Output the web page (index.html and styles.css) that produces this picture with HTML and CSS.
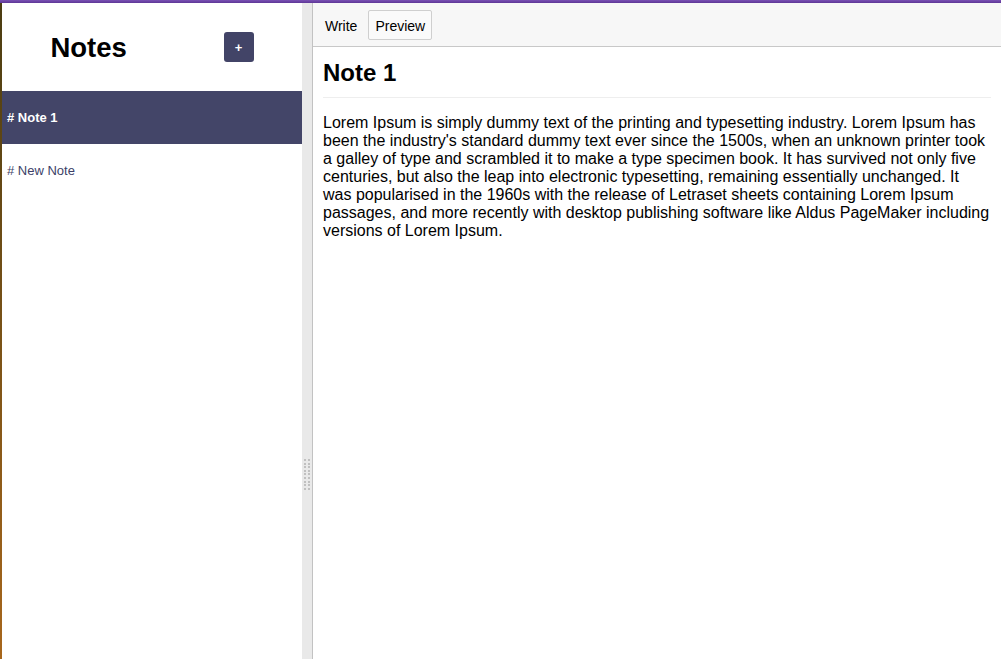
FILE: index.html
```html
<!DOCTYPE html>
<html lang="en">
<head>
<meta charset="utf-8">
<title>Notes</title>
<link rel="stylesheet" href="styles.css">
</head>
<body>
<div class="topbar"></div>
<div class="app">
  <aside class="sidebar">
    <div class="sidebar-header">
      <h3 class="sidebar-title">Notes</h3>
      <button class="new-note">+</button>
    </div>
    <div class="note selected"><h4 class="snippet">&#35; Note 1</h4></div>
    <div class="note"><span class="snippet">&#35; New Note</span></div>
  </aside>
  <div class="gutter">
    <div class="handle">
      <i></i><i></i><i></i><i></i><i></i><i></i><i></i><i></i><i></i><i></i><i></i><i></i><i></i><i></i><i></i><i></i><i></i><i></i>
    </div>
  </div>
  <main class="editor">
    <div class="toolbar">
      <button class="tab">Write</button>
      <button class="tab active">Preview</button>
    </div>
    <div class="preview">
      <h1 class="note-title">Note 1</h1>
      <p class="note-body">Lorem Ipsum is simply dummy text of the printing and typesetting industry. Lorem Ipsum has been the industry's standard dummy text ever since the 1500s, when an unknown printer took a galley of type and scrambled it to make a type specimen book. It has survived not only five centuries, but also the leap into electronic typesetting, remaining essentially unchanged. It was popularised in the 1960s with the release of Letraset sheets containing Lorem Ipsum passages, and more recently with desktop publishing software like Aldus PageMaker including versions of Lorem Ipsum.</p>
    </div>
  </main>
</div>
</body>
</html>
```
FILE: styles.css
```css
* { box-sizing: border-box; }
html, body { margin: 0; height: 100%; }
body {
  font-family: "Liberation Sans", Arial, Helvetica, sans-serif;
  color: #000;
  background: #fff;
  display: flex;
  flex-direction: column;
  overflow: hidden;
}
.topbar {
  height: 3px;
  flex: none;
  background: linear-gradient(#7a52b4, #5e3696);
}
.app {
  flex: 1;
  display: flex;
  min-height: 0;
}
.sidebar {
  width: 302px;
  flex: none;
  border-left: 2px solid;
  border-image: linear-gradient(#4b3d12, #a8671c) 1;
  background: #fff;
}
.sidebar-header {
  height: 88px;
  padding-top: 2px;
  display: flex;
  align-items: center;
  justify-content: space-around;
}
.sidebar-title {
  margin: 0;
  font-size: 27.5px;
  font-weight: bold;
  line-height: 32px;
}
.new-note {
  width: 30px;
  height: 30px;
  margin-bottom: 2px;
  border: none;
  border-radius: 3px;
  background: #424467;
  color: #fff;
  font-family: inherit;
  font-size: 13px;
  font-weight: bold;
  padding: 0;
  cursor: pointer;
}
.note {
  height: 53px;
  display: flex;
  align-items: center;
  padding-left: 5px;
  color: #3c3f68;
  font-size: 13px;
}
.note.selected {
  background: #434568;
  color: #fff;
}
.snippet {
  margin: 0;
  font-size: 13px;
}
h4.snippet { font-weight: bold; }
.gutter {
  width: 10px;
  flex: none;
  background: #e9e9e9;
  padding-top: 456px;
  padding-left: 2px;
}
.handle {
  display: grid;
  grid-template-columns: 2px 2px;
  column-gap: 2px;
  row-gap: 1.6px;
}
.handle i {
  display: block;
  width: 2px;
  height: 2px;
  background: #c0c0c0;
}
.editor {
  flex: 1;
  border-left: 1px solid #c2c2c2;
  display: flex;
  flex-direction: column;
  min-width: 0;
}
.toolbar {
  height: 44px;
  flex: none;
  background: #f7f7f7;
  border-bottom: 1px solid #c8c8c8;
  display: flex;
  align-items: center;
  gap: 4px;
  padding: 1px 5px 0;
}
.tab {
  height: 30px;
  padding: 1px 6px 0;
  border: 1px solid transparent;
  border-radius: 2px;
  background: transparent;
  font-family: inherit;
  font-size: 14px;
  color: #000;
}
.tab.active {
  border-color: #cfcfcf;
  background: #fafafa;
}
.preview {
  padding: 7px 10px 10px;
}
.note-title {
  margin: 0;
  font-size: 24px;
  line-height: 36px;
  font-weight: bold;
  padding-top: 1px;
  padding-bottom: 6px;
  border-bottom: 1px solid #eeeeee;
}
.note-body {
  margin: 16px 0 0;
  font-size: 16px;
  line-height: 18px;
}
```
